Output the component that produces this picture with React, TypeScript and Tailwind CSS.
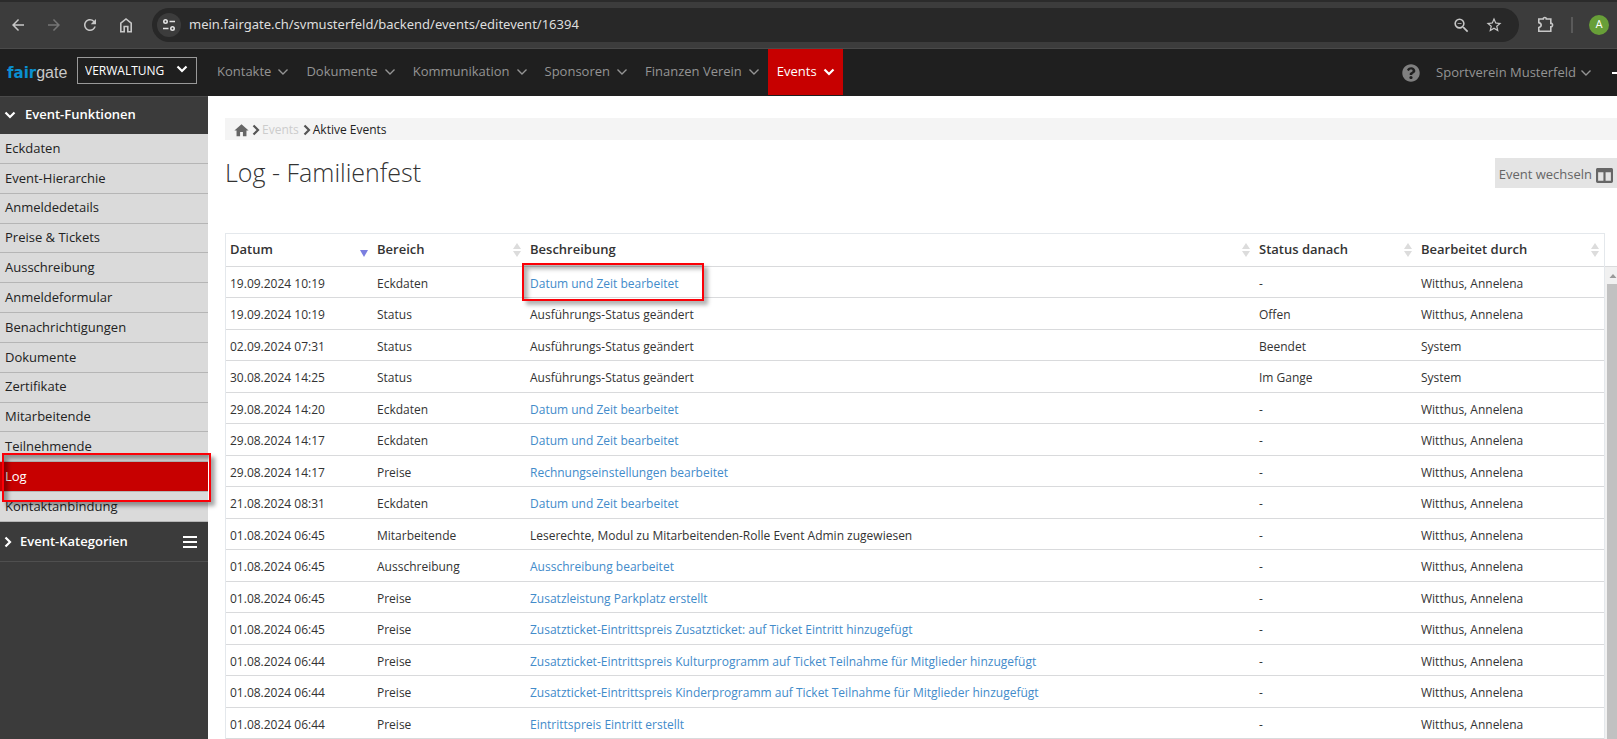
import { FaColumns, FaQuestionCircle } from "react-icons/fa";
import { MdArrowBack, MdArrowForward, MdHome, MdRefresh, MdStarBorder, MdZoomOut } from "react-icons/md";

const navItems = [
  { name: "Kontakte" },
  { name: "Dokumente" },
  { name: "Kommunikation" },
  { name: "Sponsoren" },
  { name: "Finanzen Verein" },
  { name: "Events", active: true },
];

const functions = [
  "Eckdaten",
  "Event-Hierarchie",
  "Anmeldedetails",
  "Preise & Tickets",
  "Ausschreibung",
  "Anmeldeformular",
  "Benachrichtigungen",
  "Dokumente",
  "Zertifikate",
  "Mitarbeitende",
  "Teilnehmende",
  "Log",
  "Kontaktanbindung",
];

const columns = [
  { name: "Datum", width: "w-[147px]", sorted: true },
  { name: "Bereich", width: "w-[153px]" },
  { name: "Beschreibung", width: "" },
  { name: "Status danach", width: "w-[162px]" },
  { name: "Bearbeitet durch", width: "w-[187px]" },
];

// link: the entry opens a detail view
const logs = [
  { date: "19.09.2024 10:19", area: "Eckdaten", text: "Datum und Zeit bearbeitet", link: true, status: "-", by: "Witthus, Annelena", marked: true },
  { date: "19.09.2024 10:19", area: "Status", text: "Ausführungs-Status geändert", status: "Offen", by: "Witthus, Annelena" },
  { date: "02.09.2024 07:31", area: "Status", text: "Ausführungs-Status geändert", status: "Beendet", by: "System" },
  { date: "30.08.2024 14:25", area: "Status", text: "Ausführungs-Status geändert", status: "Im Gange", by: "System" },
  { date: "29.08.2024 14:20", area: "Eckdaten", text: "Datum und Zeit bearbeitet", link: true, status: "-", by: "Witthus, Annelena" },
  { date: "29.08.2024 14:17", area: "Eckdaten", text: "Datum und Zeit bearbeitet", link: true, status: "-", by: "Witthus, Annelena" },
  { date: "29.08.2024 14:17", area: "Preise", text: "Rechnungseinstellungen bearbeitet", link: true, status: "-", by: "Witthus, Annelena" },
  { date: "21.08.2024 08:31", area: "Eckdaten", text: "Datum und Zeit bearbeitet", link: true, status: "-", by: "Witthus, Annelena" },
  { date: "01.08.2024 06:45", area: "Mitarbeitende", text: "Leserechte, Modul zu Mitarbeitenden-Rolle Event Admin zugewiesen", status: "-", by: "Witthus, Annelena" },
  { date: "01.08.2024 06:45", area: "Ausschreibung", text: "Ausschreibung bearbeitet", link: true, status: "-", by: "Witthus, Annelena" },
  { date: "01.08.2024 06:45", area: "Preise", text: "Zusatzleistung Parkplatz erstellt", link: true, status: "-", by: "Witthus, Annelena" },
  { date: "01.08.2024 06:45", area: "Preise", text: "Zusatzticket-Eintrittspreis Zusatzticket: auf Ticket Eintritt hinzugefügt", link: true, status: "-", by: "Witthus, Annelena" },
  { date: "01.08.2024 06:44", area: "Preise", text: "Zusatzticket-Eintrittspreis Kulturprogramm auf Ticket Teilnahme für Mitglieder hinzugefügt", link: true, status: "-", by: "Witthus, Annelena" },
  { date: "01.08.2024 06:44", area: "Preise", text: "Zusatzticket-Eintrittspreis Kinderprogramm auf Ticket Teilnahme für Mitglieder hinzugefügt", link: true, status: "-", by: "Witthus, Annelena" },
  { date: "01.08.2024 06:44", area: "Preise", text: "Eintrittspreis Eintritt erstellt", link: true, status: "-", by: "Witthus, Annelena" },
];

const Chevron = ({ className = "", thin = false }: { className?: string; thin?: boolean }) => (
  <svg viewBox="0 0 12 8" fill="none" stroke="currentColor" strokeWidth={thin ? 1.4 : 2.2} className={`h-2 w-3 shrink-0 ${className}`}>
    <path d="M1.5 1.5 6 6l4.5-4.5" />
  </svg>
);

const SortArrows = ({ sorted }: { sorted?: boolean }) => (
  <svg viewBox="0 0 8 14" className="h-3.5 w-2 shrink-0">
    {sorted ? (
      <path d="M0 7h8l-4 7z" fill="#7b7fe0" />
    ) : (
      <path d="M4 0l4 6H0zM0 8h8l-4 6z" fill="#dcdcdc" />
    )}
  </svg>
);

const BrowserBar = () => (
  <div className="flex h-[49px] items-center border-t-2 border-b border-t-[#2b2b2b] border-b-[#4a4a4a] bg-[#3c3c3c] pr-2 text-[#c7c7c7]">
    <div className="flex items-center">
      <button aria-label="Zurück" className="flex w-9 justify-center"><MdArrowBack size={18} /></button>
      <button aria-label="Vorwärts" className="flex w-9 justify-center text-[#757575]"><MdArrowForward size={18} /></button>
      <button aria-label="Neu laden" className="flex w-9 justify-center"><MdRefresh size={18} /></button>
      <button aria-label="Startseite" className="flex w-9 justify-center">
        <svg width="18" height="18" viewBox="0 0 18 18" fill="none" stroke="currentColor" strokeWidth="1.6">
          <path d="M3.8 15.7V7.2L9 3l5.2 4.2v8.5h-3.4v-5.2H7.2v5.2z" />
        </svg>
      </button>
    </div>
    <div className="ml-2 flex h-[34px] flex-1 items-center rounded-full bg-[#282828] pl-[5px] pr-4">
      <button aria-label="Website-Informationen" className="flex size-6 items-center justify-center rounded-full bg-[#3c3c3c] text-[#e3e3e3]">
        <svg width="14" height="14" viewBox="0 0 14 14" fill="none" stroke="currentColor" strokeWidth="1.6">
          <circle cx="3.5" cy="3.5" r="1.7" />
          <path d="M7.5 3.5H13M1 10.5h5.5" />
          <circle cx="10.5" cy="10.5" r="1.7" />
        </svg>
      </button>
      <input
        aria-label="Adresse"
        defaultValue="mein.fairgate.ch/svmusterfeld/backend/events/editevent/16394"
        className="ml-2 flex-1 bg-transparent font-['Noto_Sans',sans-serif] text-[13px] text-[#dedede] outline-none"
      />
      <button aria-label="Zoom"><MdZoomOut size={19} /></button>
      <button aria-label="Lesezeichen" className="ml-3.5"><MdStarBorder size={18} /></button>
    </div>
    <button aria-label="Erweiterungen" className="ml-[18px]">
      <svg width="18" height="18" viewBox="0 0 18 18" fill="none" stroke="currentColor" strokeWidth="1.6">
        <path d="M1.8 3H6.3V2.3Q7.8 .8 9.3 2.3V3H13.8V7.4H14.6Q16.6 9.1 14.6 10.8H13.8V15.2H1.8V11.6Q4.2 11 4.2 9.1T1.8 6.6z" />
      </svg>
    </button>
    <span className="mx-4 h-4 w-0.5 bg-[#5a5a5a]" />
    <button className="flex size-5 items-center justify-center rounded-full bg-[#689f38] font-['Roboto',sans-serif] text-[11px] text-white">
      A
    </button>
  </div>
);

const TopNav = () => (
  <header className="flex h-[47px] items-center bg-[#1f1f1f] text-[13px] text-[#949494]">
    <a href="#" className="flex w-[77px] items-baseline pl-[7px] leading-5">
      <span className="font-['DejaVu_Sans',sans-serif] text-[15px] font-bold text-[#0a8fd0]">fair</span>
      <span className="font-['Liberation_Sans',sans-serif] text-base text-[#c8c8c8]">gate</span>
    </a>
    <div className="relative -mt-1 h-[27px] w-[120px]">
      <select aria-label="Bereich wählen" className="h-full w-full appearance-none border border-[#999999] bg-[#1f1f1f] pl-[7px] text-xs text-white">
        <option>VERWALTUNG</option>
      </select>
      <Chevron className="pointer-events-none absolute right-[9px] top-2 text-white" />
    </div>
    <nav className="ml-[11px] flex h-full">
      {navItems.map((item) => (
        <a
          key={item.name}
          href="#"
          className={`flex h-[46px] items-center gap-1.5 pl-[9px] pr-2 ${item.active ? "bg-[#c70000] text-white" : ""}`}
        >
          {item.name}
          <Chevron thin={!item.active} />
        </a>
      ))}
    </nav>
    <a href="#" aria-label="Hilfe" className="ml-auto mr-4 text-[#808080]"><FaQuestionCircle size={18} /></a>
    <a href="#" className="flex items-center gap-1">
      Sportverein Musterfeld
      <Chevron thin />
    </a>
    <span className="ml-5 h-0.5 w-[5px] bg-white" />
  </header>
);

const Sidebar = () => (
  <aside className="w-[208px] shrink-0 bg-[#3b3b3b] text-[13px]">
    <h2 className="flex h-[38px] items-center border-t border-[#4a4a4a] pb-0.5 pl-1 font-semibold text-white">
      <Chevron />
      <span className="ml-[9px]">Event-Funktionen</span>
    </h2>
    <ul className="grid h-[388px] auto-rows-fr bg-[#dadada] text-[#222222]">
      {functions.map((name) => (
        <li key={name} className="relative">
          <a
            href="#"
            className={`flex h-full items-center border-b border-[#b5b5b5] pl-[5px] ${name === "Log" ? "bg-[#c70000] text-white" : ""}`}
          >
            {name}
          </a>
          {name === "Log" && (
            <span className="pointer-events-none absolute -top-[9px] left-0.5 z-10 h-[49px] w-[209px] border-2 border-[#fb0007] shadow-[4px_4px_4px_rgba(0,0,0,0.35),inset_4px_4px_4px_rgba(0,0,0,0.35)]" />
          )}
        </li>
      ))}
    </ul>
    <h2 className="flex h-10 items-center border-b border-[#4f4f4f] pl-1 pr-[11px] font-semibold text-white">
      <Chevron className="-ml-0.5 -rotate-90" />
      <span className="ml-1.5">Event-Kategorien</span>
      <button aria-label="Kategorien sortieren" className="ml-auto flex w-3.5 flex-col gap-[3px]">
        <span className="h-0.5 bg-white" />
        <span className="h-0.5 bg-white" />
        <span className="h-0.5 bg-white" />
      </button>
    </h2>
  </aside>
);

const LogTable = () => (
  <div className="mt-[43px] flex">
    <table className="min-w-0 flex-1 table-fixed border-separate border-spacing-0 border border-b-0 border-[#e4e8ec] text-left text-xs text-[#333333]">
      <thead>
        <tr className="h-[33px]">
          {columns.map((col) => (
            <th key={col.name} className={`border-b border-[#d9dadc] py-0 pl-1 pr-[5px] text-[13px] font-semibold ${col.width}`}>
              <div className="flex items-center justify-between">
                {col.name}
                <SortArrows sorted={col.sorted} />
              </div>
            </th>
          ))}
        </tr>
      </thead>
      <tbody>
        {logs.map((log, index) => (
          <tr key={index} className="odd:h-[31px] even:h-8">
            <td className="border-b border-[#d9dadc] pt-[3px] pb-0 pl-1">{log.date}</td>
            <td className="border-b border-[#d9dadc] pt-[3px] pb-0 pl-1">{log.area}</td>
            <td className="relative border-b border-[#d9dadc] pt-[3px] pb-0 pl-1">
              {log.link ? <a href="#" className="text-[#428bca]">{log.text}</a> : log.text}
              {log.marked && (
                <span className="pointer-events-none absolute -left-1 -top-1 h-[38px] w-[182px] border-2 border-[#fb0007] shadow-[4px_4px_4px_rgba(0,0,0,0.3),inset_4px_4px_4px_rgba(0,0,0,0.3)]" />
              )}
            </td>
            <td className="border-b border-[#d9dadc] pt-[3px] pb-0 pl-1">{log.status}</td>
            <td className="border-b border-[#d9dadc] pt-[3px] pb-0 pl-1">{log.by}</td>
          </tr>
        ))}
      </tbody>
    </table>
    <div className="mt-[33px] flex w-3 flex-col border-t border-[#d9dadc] bg-[#f1f1f1] pl-0.5">
      <svg viewBox="0 0 10 17" className="h-[17px] w-2.5">
        <path d="M2.5 11h7L6 7z" fill="#9a9a9a" />
      </svg>
      <div className="flex-1 bg-[#c1c1c1]" />
    </div>
  </div>
);

export default function App() {
  return (
    <div className="flex h-screen flex-col overflow-hidden bg-white font-['Open_Sans',sans-serif]">
      <BrowserBar />
      <TopNav />
      <div className="flex min-h-0 flex-1">
        <Sidebar />
        <main className="min-w-0 flex-1 pl-[17px] pt-[22px]">
          <div className="flex h-[22px] items-center bg-[#f4f4f4] pt-0.5 pl-2 text-xs text-[#222222]">
            <a href="#" aria-label="Startseite" className="text-[#666666]"><MdHome size={17} /></a>
            <Chevron className="-rotate-90 text-[#555555]" />
            <a href="#" className="text-[#cccccc]">Events</a>
            <Chevron className="ml-0.5 -rotate-90 text-[#555555]" />
            <span>Aktive Events</span>
          </div>
          <div className="mt-3.5 flex items-start justify-between">
            <h1 className="text-[25px] leading-9 font-light text-[#333333]">Log - Familienfest</h1>
            <button className="mt-1 flex h-[30px] items-center gap-1 bg-[#e4e4e4] px-1 pt-1 text-[13px] text-[#666666]">
              Event wechseln
              <FaColumns size={17} />
            </button>
          </div>
          <LogTable />
        </main>
      </div>
    </div>
  );
}
